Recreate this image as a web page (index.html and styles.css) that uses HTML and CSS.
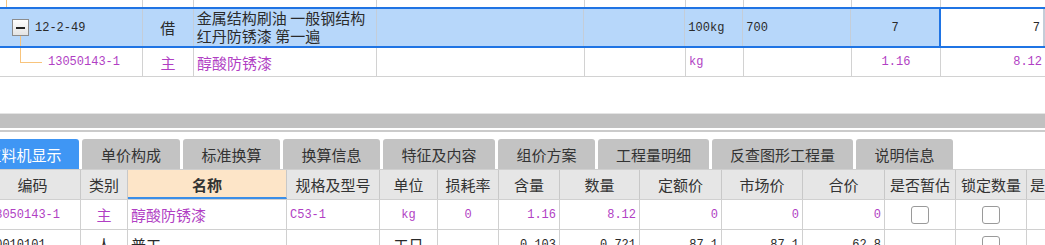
FILE: index.html
```html
<!DOCTYPE html>
<html>
<head>
  <title>工料机显示</title>
  <link rel="stylesheet" href="styles.css">
</head>
<body>
  <div class="page">
    <!-- upper grid: quota rows -->
    <div class="top-grid">
      <div class="trow trow-cut">
        <div class="tc c-code"><span class="tree-up"></span></div>
        <div class="tc c-type"></div>
        <div class="tc c-name"></div>
        <div class="tc c-spec"></div>
        <div class="tc c-blank"></div>
        <div class="tc c-unit"></div>
        <div class="tc c-qty"></div>
        <div class="tc c-num"></div>
        <div class="tc c-last"></div>
      </div>
      <div class="trow trow-main">
        <div class="tc c-code">
          <span class="fold"></span><span class="mono">12-2-49</span>
          <span class="tree-down"></span>
        </div>
        <div class="tc c-type center">借</div>
        <div class="tc c-name name-top">金属结构刷油 一般钢结构<br>红丹防锈漆 第一遍</div>
        <div class="tc c-spec"></div>
        <div class="tc c-blank"></div>
        <div class="tc c-unit mono">100kg</div>
        <div class="tc c-qty mono">700</div>
        <div class="tc c-num mono center">7</div>
        <div class="tc c-last editing mono right">7</div>
      </div>
      <div class="trow trow-child">
        <div class="tc c-code">
          <span class="tree-branch"></span><span class="mono purple child-code">13050143-1</span>
        </div>
        <div class="tc c-type center purple">主</div>
        <div class="tc c-name purple">醇酸防锈漆</div>
        <div class="tc c-spec"></div>
        <div class="tc c-blank"></div>
        <div class="tc c-unit mono purple">kg</div>
        <div class="tc c-qty"></div>
        <div class="tc c-num mono center purple">1.16</div>
        <div class="tc c-last mono right purple">8.12</div>
      </div>
    </div>

    <div class="hscroll"></div>
    <div class="splitter"></div>

    <div class="tab-clip">
      <div class="tabs">
        <div class="tab active t-110">工料机显示</div>
        <div class="tab t-98">单价构成</div>
        <div class="tab t-97">标准换算</div>
        <div class="tab t-97">换算信息</div>
        <div class="tab t-112">特征及内容</div>
        <div class="tab t-97">组价方案</div>
        <div class="tab t-111">工程量明细</div>
        <div class="tab t-141">反查图形工程量</div>
        <div class="tab t-97">说明信息</div>
      </div>
    </div>

    <!-- lower grid: resources -->
    <div class="res-grid">
      <div class="rrow rhead">
        <div class="rc w-code">编码</div>
        <div class="rc w-type">类别</div>
        <div class="rc w-name sorted">名称</div>
        <div class="rc w-spec">规格及型号</div>
        <div class="rc w-unit">单位</div>
        <div class="rc w-loss">损耗率</div>
        <div class="rc w-cont">含量</div>
        <div class="rc w-qty">数量</div>
        <div class="rc w-price">定额价</div>
        <div class="rc w-market">市场价</div>
        <div class="rc w-total">合价</div>
        <div class="rc w-est">是否暂估</div>
        <div class="rc w-lock">锁定数量</div>
        <div class="rc w-more">是否</div>
      </div>
      <div class="rrow">
        <div class="rc w-code left mono purple">13050143-1</div>
        <div class="rc w-type purple">主</div>
        <div class="rc w-name left purple">醇酸防锈漆</div>
        <div class="rc w-spec left mono purple">C53-1</div>
        <div class="rc w-unit mono purple">kg</div>
        <div class="rc w-loss mono purple">0</div>
        <div class="rc w-cont right mono purple">1.16</div>
        <div class="rc w-qty right mono purple">8.12</div>
        <div class="rc w-price right mono purple">0</div>
        <div class="rc w-market right mono purple">0</div>
        <div class="rc w-total right mono purple">0</div>
        <div class="rc w-est"><span class="check"></span></div>
        <div class="rc w-lock"><span class="check"></span></div>
        <div class="rc w-more"></div>
      </div>
      <div class="rrow">
        <div class="rc w-code left mono">00010101</div>
        <div class="rc w-type">人</div>
        <div class="rc w-name left">普工</div>
        <div class="rc w-spec"></div>
        <div class="rc w-unit">工日</div>
        <div class="rc w-loss"></div>
        <div class="rc w-cont right mono">0.103</div>
        <div class="rc w-qty right mono">0.721</div>
        <div class="rc w-price right mono">87.1</div>
        <div class="rc w-market right mono">87.1</div>
        <div class="rc w-total right mono">62.8</div>
        <div class="rc w-est"></div>
        <div class="rc w-lock"><span class="check"></span></div>
        <div class="rc w-more"></div>
      </div>
    </div>
  </div>
</body>
</html>
```

FILE: styles.css
```css
body {
  margin: 0;
  font-family: "Noto Sans CJK SC", sans-serif;
  font-size: 15px;
  color: #2a2a2a;
  background: #fff;
}
.page {
  width: 1045px;
  height: 245px;
  overflow: hidden;
}
.mono {
  font-family: "Liberation Mono", "Noto Sans CJK SC", monospace;
  font-size: 12px;
}
.purple {
  color: #b13fc4;
}
.center {
  justify-content: center;
}
.right {
  justify-content: flex-end;
}

/* upper grid */
.top-grid {
  height: 77px;
}
.trow {
  display: flex;
}
.tc {
  box-sizing: border-box;
  display: flex;
  align-items: center;
  border-right: 1px solid #d2d2d2;
  padding: 0 3px;
  white-space: nowrap;
  position: relative;
}
.c-code { width: 143px; padding-left: 0; }
.c-type { width: 51px; }
.c-name { width: 183px; }
.c-spec { width: 208px; }
.c-blank { width: 101px; }
.c-unit { width: 58px; }
.c-qty { width: 108px; }
.c-num { width: 89px; }
.c-last { width: 104px; border-right: none; }

.trow-cut {
  height: 7px;
}
.trow-main {
  height: 41px;
  background: #b7d7fa;
  border-top: 2px solid #1f74e4;
  border-bottom: 2px solid #1f74e4;
  box-sizing: border-box;
}
.trow-main .tc {
  border-right-color: #c4cdd8;
}
.name-top {
  align-items: flex-start;
  line-height: 18px;
}
.editing {
  background: #fff;
  border-left: 2px solid #1f74e4;
  border-right: 2px solid #1f74e4;
  margin-left: -1px;
  width: 106px;
  padding-right: 3px;
}
.trow-child {
  height: 29px;
  border-bottom: 1px solid #d2d2d2;
  box-sizing: border-box;
}

/* tree connectors */
.tree-up {
  position: absolute;
  left: 6px;
  top: 0;
  width: 1px;
  height: 7px;
  background: #f8c47c;
}
.fold {
  box-sizing: border-box;
  width: 17px;
  height: 17px;
  margin: 0 6px 0 12px;
  border: 1px solid #8c8c8c;
  background: linear-gradient(#fdfdfd, #e4e4e4);
  display: flex;
  align-items: center;
  justify-content: center;
  flex-shrink: 0;
}
.fold::before {
  content: "";
  width: 9px;
  height: 2px;
  background: #222;
}
.tree-down {
  position: absolute;
  left: 20px;
  top: 27px;
  width: 1px;
  height: 10px;
  background: #f8c47c;
}
.tree-branch {
  position: absolute;
  left: 20px;
  top: 0;
  width: 21px;
  height: 14px;
  border-left: 1px solid #f8c47c;
  border-bottom: 1px solid #f8c47c;
}
.child-code {
  margin-left: 48px;
}

/* splitter and scrollbar */
.hscroll {
  margin-top: 36px;
  height: 14px;
  border-top: 1px solid #e4e4e4;
  background: #c0c0c0;
}
.splitter {
  margin-top: 2px;
  height: 2px;
  background: #cbcbcb;
}

/* tabs */
.tab-clip {
  margin-top: 7px;
  overflow: hidden;
}
.tabs {
  display: flex;
  gap: 3px;
  margin-left: -31px;
  height: 30px;
}
.tab {
  box-sizing: border-box;
  display: flex;
  align-items: center;
  justify-content: center;
  flex-shrink: 0;
  background: #c3c3c3;
  border-radius: 3px 3px 0 0;
  color: #333;
  white-space: nowrap;
}
.tab.active {
  background: #3f96f4;
  color: #fff;
}
.t-97 { width: 97px; }
.t-98 { width: 98px; }
.t-110 { width: 110px; }
.t-111 { width: 111px; }
.t-112 { width: 112px; }
.t-141 { width: 141px; }

/* lower grid */
.res-grid {
  margin-left: -16px;
  border-top: 1px solid #cfcfcf;
}
.rrow {
  display: flex;
  height: 30px;
  border-bottom: 1px solid #d0d0d0;
  box-sizing: border-box;
}
.rc {
  box-sizing: border-box;
  display: flex;
  align-items: center;
  justify-content: center;
  border-right: 1px solid #d0d0d0;
  padding: 0 3px;
  white-space: nowrap;
  flex-shrink: 0;
}
.rhead {
  background: #e6e6e6;
  color: #333;
}
.rhead .rc {
  border-right-color: #c8c8c8;
}
.rhead .sorted {
  background: #fde5c8;
  font-weight: bold;
  border-bottom: 2px solid #3a8ee8;
  padding-top: 2px;
}
.rc.left { justify-content: flex-start; }
.rc.right { justify-content: flex-end; }

.w-code { width: 97px; padding-left: 4px; }
.w-type { width: 47px; }
.w-name { width: 159px; }
.w-spec { width: 93px; }
.w-unit { width: 58px; }
.w-loss { width: 61px; }
.w-cont { width: 61px; }
.w-qty { width: 80px; }
.w-price { width: 82px; }
.w-market { width: 81px; }
.w-total { width: 82px; }
.w-est { width: 71px; }
.w-lock { width: 71px; }
.w-more { width: 71px; justify-content: flex-start; }

.check {
  width: 16px;
  height: 16px;
  border: 1px solid #9a9a9a;
  border-radius: 3px;
  background: #fff;
}
```
